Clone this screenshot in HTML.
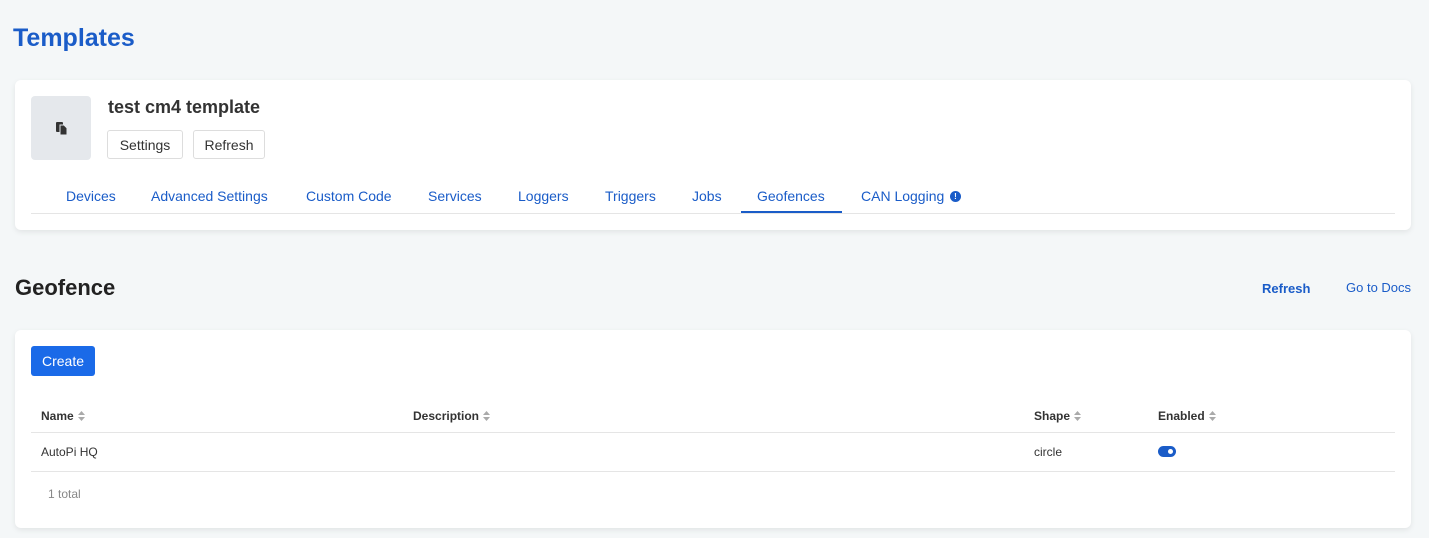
<!DOCTYPE html><html><head><style>
*{margin:0;padding:0;box-sizing:border-box}
body{width:1429px;height:538px;background:#f4f7f8;font-family:"Liberation Sans",sans-serif;position:relative;overflow:hidden;color:#333}
.a{position:absolute;white-space:nowrap}
.card{position:absolute;left:15px;width:1396px;background:#fff;border-radius:6px;box-shadow:0 2px 6px rgba(0,0,0,.08)}
.btn{position:absolute;top:130px;height:29px;border:1px solid #ddd;border-radius:3px;font-size:14px;line-height:28px;text-align:center;color:#333;background:#fff}
.tab{position:absolute;top:188px;font-size:14px;color:#1a5cc8}
.th{position:absolute;top:409px;font-size:12px;font-weight:bold;color:#333}
.s{display:inline-block;vertical-align:middle;margin-left:4px;margin-top:-2px}
</style></head><body>
<div class="a" style="left:13px;top:24px;font-size:25px;font-weight:bold;color:#1a5cc8">Templates</div>
<div class="card" style="top:80px;height:150px"></div>
<div class="a" style="left:31px;top:96px;width:60px;height:64px;background:#e5e8ec;border-radius:4px"></div>
<svg class="a" style="left:55px;top:121px" width="14" height="14" viewBox="0 0 14 14"><rect x="1" y="1" width="7" height="10" rx="1" fill="#333"/><path d="M5 4h4l3 3v7H5z" fill="#333" stroke="#e5e8ec" stroke-width="1"/></svg>
<div class="a" style="left:108px;top:97px;font-size:18px;font-weight:bold;color:#333">test cm4 template</div>
<div class="btn" style="left:107px;width:76px">Settings</div>
<div class="btn" style="left:193px;width:72px">Refresh</div>
<div class="tab" style="left:66px">Devices</div>
<div class="tab" style="left:151px">Advanced Settings</div>
<div class="tab" style="left:306px">Custom Code</div>
<div class="tab" style="left:428px">Services</div>
<div class="tab" style="left:518px">Loggers</div>
<div class="tab" style="left:605px">Triggers</div>
<div class="tab" style="left:692px">Jobs</div>
<div class="tab" style="left:757px">Geofences</div>
<div class="tab" style="left:861px">CAN Logging</div>
<div class="a" style="left:950px;top:191px;width:11px;height:11px;border-radius:50%;background:#1a5cc8;color:#fff;font-size:8px;font-weight:bold;text-align:center;line-height:11px">!</div>
<div class="a" style="left:31px;top:213px;width:1364px;height:1px;background:#e5e5e5"></div>
<div class="a" style="left:741px;top:211px;width:101px;height:2px;background:#1a5cc8"></div>
<div class="a" style="left:15px;top:275px;font-size:22px;font-weight:bold;color:#222">Geofence</div>
<div class="a" style="left:1262px;top:281px;font-size:13px;font-weight:bold;color:#1a5cc8">Refresh</div>
<div class="a" style="left:1346px;top:280px;font-size:13px;color:#1a5cc8">Go to Docs</div>
<div class="card" style="top:330px;height:198px"></div>
<div class="a" style="left:31px;top:346px;width:64px;height:30px;background:#1a6ae8;border-radius:3px;color:#fff;font-size:14px;text-align:center;line-height:30px">Create</div>
<div class="th" style="left:41px">Name<svg class="s" width="7" height="10" viewBox="0 0 7 10"><path d="M0 4L3.5 0L7 4zM0 6L3.5 10L7 6z" fill="#aaa"/></svg></div>
<div class="th" style="left:413px">Description<svg class="s" width="7" height="10" viewBox="0 0 7 10"><path d="M0 4L3.5 0L7 4zM0 6L3.5 10L7 6z" fill="#aaa"/></svg></div>
<div class="th" style="left:1034px">Shape<svg class="s" width="7" height="10" viewBox="0 0 7 10"><path d="M0 4L3.5 0L7 4zM0 6L3.5 10L7 6z" fill="#aaa"/></svg></div>
<div class="th" style="left:1158px">Enabled<svg class="s" width="7" height="10" viewBox="0 0 7 10"><path d="M0 4L3.5 0L7 4zM0 6L3.5 10L7 6z" fill="#aaa"/></svg></div>
<div class="a" style="left:31px;top:432px;width:1364px;height:1px;background:#e5e5e5"></div>
<div class="a" style="left:41px;top:445px;font-size:12px">AutoPi HQ</div>
<div class="a" style="left:1034px;top:445px;font-size:12px">circle</div>
<div class="a" style="left:1158px;top:446px;width:18px;height:11px;border-radius:6px;background:#1a5cc8"><div style="position:absolute;right:3px;top:3px;width:5px;height:5px;border-radius:50%;background:#fff"></div></div>
<div class="a" style="left:31px;top:471px;width:1364px;height:1px;background:#e5e5e5"></div>
<div class="a" style="left:48px;top:487px;font-size:12px;color:#888">1 total</div>
</body></html>
